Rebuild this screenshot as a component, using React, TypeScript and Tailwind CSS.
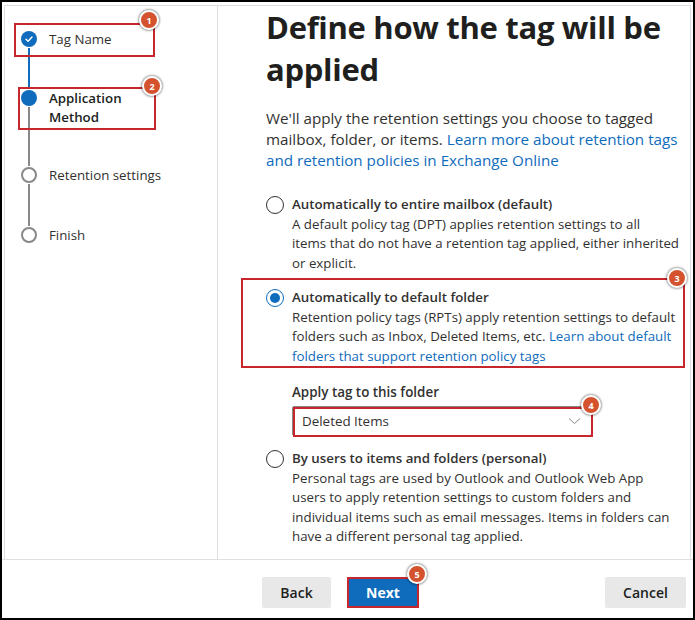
import React from "react";

function Badge({ n, className }: { n: number; className: string }) {
  return (
    <div
      className={
        "absolute w-5 h-5 rounded-full bg-[#d4532e] border-2 border-white shadow-[0_0_2px_1px_rgba(0,0,0,0.35)] flex items-center justify-center text-[9px] font-bold text-white leading-none " +
        className
      }
    >
      {n}
    </div>
  );
}

function Radio({ checked }: { checked?: boolean }) {
  return checked ? (
    <div className="w-[18px] h-[18px] shrink-0 rounded-full border-[1.5px] border-[#0f6cbd] flex items-center justify-center">
      <div className="w-[10px] h-[10px] rounded-full bg-[#0f6cbd]" />
    </div>
  ) : (
    <div className="w-[18px] h-[18px] shrink-0 rounded-full border border-[#323130]" />
  );
}

function Option({
  title,
  checked,
  children,
}: {
  title: string;
  checked?: boolean;
  children: React.ReactNode;
}) {
  return (
    <div className="flex gap-[8px]">
      <div className="pt-[1px]">
        <Radio checked={checked} />
      </div>
      <div className="text-[13.3px] leading-[19.5px] whitespace-nowrap">
        <div className="font-semibold">{title}</div>
        <div>{children}</div>
      </div>
    </div>
  );
}

export default function App() {
  return (
    <div className="relative w-[695px] h-[620px] bg-white font-['Open_Sans',sans-serif] text-[#323130]">
      <div className="h-full border-2 border-black flex flex-col">
        {/* wizard body */}
        <div className="mt-[3px] mx-[2px] h-[554px] flex border border-b-0 border-[#e1dfdd]">
          {/* steps */}
          <div className="w-[213px] border-r border-[#e1dfdd] pt-[25px] pl-[16px] text-[13.3px]">
            <div className="flex">
              <div className="flex flex-col items-center w-4">
                <div className="w-4 h-4 rounded-full bg-[#0f6cbd] flex items-center justify-center">
                  <svg width="10" height="10" viewBox="0 0 10 10" fill="none">
                    <path d="M2 5.2 4.1 7.2 8 3" stroke="white" strokeWidth="1.4" strokeLinecap="round" strokeLinejoin="round" />
                  </svg>
                </div>
                <div className="w-[2px] h-[41px] my-[1px] bg-[#0f6cbd]" />
              </div>
              <div className="ml-[12px] leading-[19px] -mt-[1.5px]">Tag Name</div>
            </div>
            <div className="flex">
              <div className="flex flex-col items-center w-4">
                <div className="w-4 h-4 rounded-full bg-[#0f6cbd]" />
                <div className="w-[2px] h-[59px] my-[1px] bg-[#8a8886]" />
              </div>
              <div className="ml-[12px] leading-[19px] -mt-[1.5px] font-semibold text-[#201f1e]">
                Application
                <br />
                Method
              </div>
            </div>
            <div className="flex">
              <div className="flex flex-col items-center w-4">
                <div className="w-4 h-4 rounded-full border-2 border-[#8a8886]" />
                <div className="w-[2px] h-[42px] my-[1px] bg-[#8a8886]" />
              </div>
              <div className="ml-[12px] leading-[19px] -mt-[1.5px]">Retention settings</div>
            </div>
            <div className="flex">
              <div className="flex flex-col items-center w-4">
                <div className="w-4 h-4 rounded-full border-2 border-[#8a8886]" />
              </div>
              <div className="ml-[12px] leading-[19px] -mt-[1.5px]">Finish</div>
            </div>
          </div>

          {/* main */}
          <div className="flex-1 pl-[48px] pr-[4px]">
            <h1 className="text-[31px] leading-[42px] font-bold text-[#201f1e] tracking-[-0.3px] whitespace-nowrap">
              Define how the tag will be
              <br />
              applied
            </h1>
            <p className="mt-[18px] text-[15.2px] leading-[21px] whitespace-nowrap">
              We'll apply the retention settings you choose to tagged
              <br />
              mailbox, folder, or items.{" "}
              <span className="text-[#0f6cbd]">
                Learn more about retention tags
                <br />
                and retention policies in Exchange Online
              </span>
            </p>

            <div className="mt-[24px] flex flex-col">
              <Option title="Automatically to entire mailbox (default)">
                A default policy tag (DPT) applies retention settings to all
                <br />
                items that do not have a retention tag applied, either inherited
                <br />
                or explicit.
              </Option>
              <div className="mt-[15px]">
                <Option title="Automatically to default folder" checked>
                  Retention policy tags (RPTs) apply retention settings to default
                  <br />
                  folders such as Inbox, Deleted Items, etc.{" "}
                  <span className="text-[#0f6cbd]">
                    Learn about default
                    <br />
                    folders that support retention policy tags
                  </span>
                </Option>
              </div>
              <div className="mt-[16px] pl-[26px]">
                <div className="text-[13.4px] leading-[20px] font-semibold">Apply tag to this folder</div>
                <div className="mt-[4px] w-[300px] h-[30px] border border-[#8a8886] rounded-[2px] flex items-center justify-between pl-[9px] pr-[10px] text-[13.4px]">
                  <span>Deleted Items</span>
                  <svg width="13" height="8" viewBox="0 0 13 8" fill="none">
                    <path d="M1 1.5 6.5 6.5 12 1.5" stroke="#8a8886" strokeWidth="1" />
                  </svg>
                </div>
              </div>
              <div className="mt-[13px]">
                <Option title="By users to items and folders (personal)">
                  Personal tags are used by Outlook and Outlook Web App
                  <br />
                  users to apply retention settings to custom folders and
                  <br />
                  individual items such as email messages. Items in folders can
                  <br />
                  have a different personal tag applied.
                </Option>
              </div>
            </div>
          </div>
        </div>

        {/* footer */}
        <div className="flex-1 border-t border-[#e1dfdd] flex items-start pt-[17px] pl-[260px] pr-[7px] text-[14px] font-semibold">
          <button className="w-[69px] h-[31px] bg-[#e8e8e8] rounded-[2px] text-[#201f1e]">Back</button>
          <button className="ml-[17px] w-[70px] h-[31px] bg-[#0f6cbd] rounded-[2px] text-white font-bold">Next</button>
          <button className="ml-auto w-[81px] h-[31px] bg-[#e8e8e8] rounded-[2px] text-[#201f1e]">Cancel</button>
        </div>
      </div>

      {/* annotations */}
      <div className="absolute left-[14px] top-[23px] w-[141px] h-[34px] border-2 border-[#c8262d]" />
      <Badge n={1} className="left-[139px] top-[10px]" />
      <div className="absolute left-[18px] top-[87px] w-[138px] h-[43px] border-2 border-[#c8262d]" />
      <Badge n={2} className="left-[142px] top-[76px]" />
      <div className="absolute left-[241px] top-[278px] w-[444px] h-[90px] border-2 border-[#c8262d]" />
      <Badge n={3} className="left-[667px] top-[268px]" />
      <div className="absolute left-[293px] top-[407px] w-[300px] h-[30px] border-2 border-[#c8262d]" />
      <Badge n={4} className="left-[581px] top-[395px]" />
      <div className="absolute left-[347px] top-[577px] w-[72px] h-[31px] border-2 border-[#c8262d]" />
      <Badge n={5} className="left-[407px] top-[564px]" />
    </div>
  );
}
